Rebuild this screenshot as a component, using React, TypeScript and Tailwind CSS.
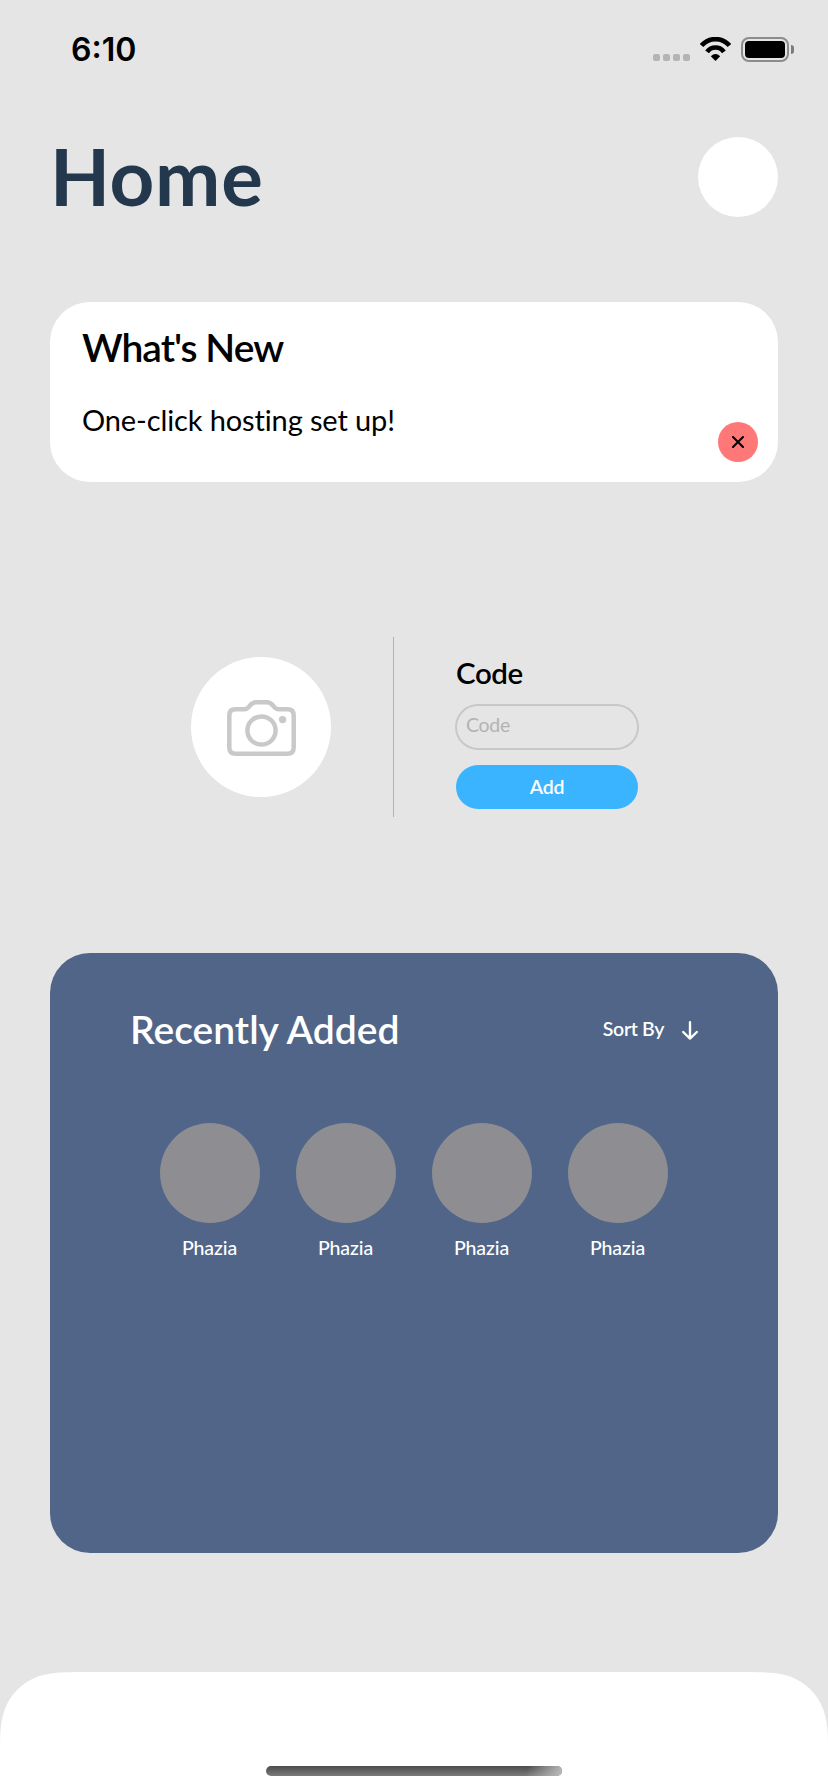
import React from "react";

const recent = ["Phazia", "Phazia", "Phazia", "Phazia"];

function StatusBar() {
  return (
    <div className="flex h-[137px] items-start justify-between pt-[29px] pr-[34px] pl-[71px]">
      <span className="pt-px font-['Inter',sans-serif] text-[32px] leading-[40px] font-semibold">
        6:10
      </span>
      <div className="flex items-start pt-2">
        <div className="mt-[17px] mr-[10px] flex gap-[3px]">
          {[0, 1, 2, 3].map((i) => (
            <span key={i} className="size-[7px] rounded-[2px] bg-[#b4b4b4]" />
          ))}
        </div>
        <svg className="mr-[10px]" width="31" height="24" viewBox="0 0 31 24" fill="none">
          <path d="M1.5 8.6A18.4 18.4 0 0 1 29.5 8.6" stroke="#000" strokeWidth="4.7" />
          <path d="M7.1 14.9A10.3 10.3 0 0 1 23.9 14.9" stroke="#000" strokeWidth="4.6" />
          <path d="M10.8 19.3Q15.5 14.8 20.2 19.3L15.5 24Z" fill="#000" />
        </svg>
        <div className="h-[25px] w-12 rounded-[8px] border-2 border-[#8c8c8c] p-[2px]">
          <div className="h-full w-full rounded-[4px] bg-black" />
        </div>
        <span className="mt-2 ml-[2px] h-[9px] w-[3px] rounded-r-full bg-[#7c7c7c]" />
      </div>
    </div>
  );
}

function CameraIcon() {
  return (
    <svg width="69" height="56" viewBox="0 0 69 56" fill="none" stroke="#c9c9c9" strokeWidth="4.5">
      <path d="M8.5 9.3H17.5C20 9.3 21 8 22.6 6C24.5 3.6 25.7 2.3 28.7 2.3H40.3C43.3 2.3 44.5 3.6 46.4 6C48 8 49 9.3 51.5 9.3H60.5Q66.7 9.3 66.7 15.5V47.5Q66.7 53.7 60.5 53.7H8.5Q2.3 53.7 2.3 47.5V15.5Q2.3 9.3 8.5 9.3Z" />
      <circle cx="34.5" cy="30.5" r="14.1" />
      <circle cx="55.6" cy="19.6" r="3.7" fill="#c9c9c9" stroke="none" />
    </svg>
  );
}

export default function App() {
  return (
    <div className="flex h-[1792px] w-[828px] flex-col overflow-hidden bg-[#e5e5e5] font-['Lato',sans-serif] text-black [font-variant-ligatures:no-common-ligatures]">
      <StatusBar />

      <header className="flex h-20 items-start justify-between px-[50px]">
        <h1 className="text-[78px] leading-[78px] font-bold tracking-[0.7px] text-[#23374d]">Home</h1>
        <div className="size-20 rounded-full bg-white" />
      </header>

      <section className="relative mx-[50px] mt-[85px] h-[180px] rounded-[40px] bg-white px-8 pt-[21px]">
        <h2 className="text-[39px] leading-[48px] font-semibold tracking-[-1px]">What's New</h2>
        <p className="mt-[31px] text-[29px] leading-[36px] tracking-[-0.12px]">One-click hosting set up!</p>
        <button className="absolute right-5 bottom-5 flex size-10 items-center justify-center rounded-full bg-[#ff7878]">
          <svg width="12" height="12" viewBox="0 0 12 12" stroke="#000" strokeWidth="2" strokeLinecap="round">
            <path d="M1 1L11 11M11 1L1 11" />
          </svg>
        </button>
      </section>

      <section className="mt-[155px] flex h-[180px] items-start pl-[191px]">
        <div className="mt-5 flex size-[140px] items-center justify-center rounded-full bg-white pt-[2px] pl-px">
          <CameraIcon />
        </div>
        <div className="ml-[62px] h-full w-px bg-[#b2b2b2]" />
        <div className="ml-[61px] flex w-[184px] flex-col pt-[18px]">
          <h3 className="pl-px text-[29.5px] leading-[36px] font-semibold tracking-[-0.4px]">Code</h3>
          <input
            placeholder="Code"
            className="mt-[13px] h-[46px] rounded-[23px] border-2 border-[#c8c8c8] bg-transparent pb-[5px] pl-[9px] text-[19.5px] tracking-[-0.3px] placeholder:text-[#b3b3b3]"
          />
          <button className="mx-px mt-[15px] h-11 rounded-[22px] bg-[#3ab4ff] text-[19.5px] leading-[24px] font-semibold tracking-[-0.2px] text-white">
            Add
          </button>
        </div>
      </section>

      <section className="mx-[50px] mt-[136px] h-[600px] rounded-[40px] bg-[#506588] pt-[52px] text-white">
        <div className="flex h-12 items-center justify-between px-20">
          <h2 className="text-[39px] leading-[48px] font-semibold">Recently Added</h2>
          <button className="flex items-center">
            <span className="text-[19.5px] leading-[24px] font-semibold tracking-[-0.35px]">Sort By</span>
            <svg
              className="mt-[3px] ml-[18px]"
              width="16"
              height="19"
              viewBox="0 0 16 19"
              fill="none"
              stroke="#fff"
              strokeWidth="2.4"
              strokeLinecap="round"
              strokeLinejoin="round"
            >
              <path d="M8 1.2V17.6M1.2 11L8 17.6L14.8 11" />
            </svg>
          </button>
        </div>
        <div className="mt-[70px] flex justify-center gap-9">
          {recent.map((name, i) => (
            <div key={i} className="flex w-[100px] flex-col items-center">
              <div className="size-[100px] rounded-full bg-[#8e8d92]" />
              <span className="mt-[13px] pr-px text-[19.5px] leading-[24px] font-medium tracking-[-0.1px]">{name}</span>
            </div>
          ))}
        </div>
      </section>

      <nav className="mt-auto flex h-[120px] items-end justify-center bg-white pb-4 [clip-path:path('M0_120L0_80C0_62_0_52.1_4.5_37.9C10.1_22.4_22.4_10.1_37.9_4.5C52.1_0_65.3_0_91.7_0L736.3_0C762.7_0_775.9_0_790.1_4.5C805.6_10.1_817.9_22.4_823.5_37.9C828_52.1_828_62_828_80L828_120Z')]">
        <div className="flex h-[10px] w-[296px] justify-end overflow-hidden rounded-full bg-linear-to-b from-[#4c4c4c] to-[#7b7b7b]">
          <div className="h-full w-10 bg-[linear-gradient(110deg,transparent_15%,#b8b8b8_95%)]" />
        </div>
      </nav>
    </div>
  );
}
